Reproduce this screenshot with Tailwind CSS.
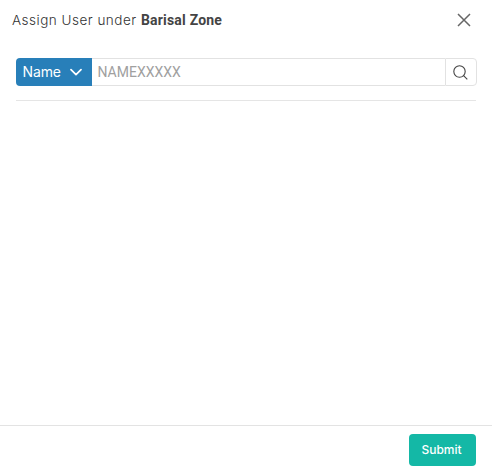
<!DOCTYPE html>
<html lang="en">
<head>
<meta charset="utf-8">
<title>Assign User</title>
<script src="https://cdn.jsdelivr.net/npm/@tailwindcss/browser@4"></script>
</head>
<body class="bg-white font-['Inter',sans-serif]">
<div class="flex h-[471px] w-[492px] flex-col overflow-hidden">
  <header class="flex h-10 shrink-0 items-center justify-between pl-3 pr-[21px]">
    <h1 class="text-[13.5px] leading-5 tracking-[0.5px] whitespace-nowrap text-[#333]"><span class="font-light">Assign User under</span> <b class="font-['Roboto',sans-serif] text-[14px] font-bold tracking-[0.2px] text-[#444]">Barisal Zone</b></h1>
    <button aria-label="Close"><svg class="block size-[14px]" viewBox="0 0 14 14" fill="none" stroke="#666" stroke-width="1.5"><path d="M1 1l12 12M13 1L1 13"/></svg></button>
  </header>
  <main class="flex-1 pl-4 pr-[15px] pt-[18px]">
    <div class="flex h-7">
      <button class="flex w-[76px] shrink-0 items-center rounded-l bg-[#287fb9] pl-[6.5px] text-[14px] text-white">
        <span class="w-[39px] pb-px text-left tracking-[-0.1px]">Name</span>
        <svg class="ml-2 h-3 w-3" viewBox="0 0 12 12" fill="none" stroke="currentColor" stroke-width="1.7" stroke-linecap="round" stroke-linejoin="round"><path d="M1 3.7l5 5 5-5"/></svg>
      </button>
      <div class="flex flex-1 items-center border-y border-[#e2e2e2] pl-[5.5px] font-['Roboto',sans-serif] text-[14px] text-[#a0a0a0]">NAMEXXXXX</div>
      <button aria-label="Search" class="flex w-8 shrink-0 items-center justify-center rounded-r border border-[#e2e2e2]"><svg class="mr-px size-[15px]" viewBox="0 0 15 15" fill="none" stroke="#444" stroke-width="1.1"><circle cx="6.5" cy="6.5" r="5.7"/><path d="M10.6 10.6l3.7 3.7"/></svg></button>
    </div>
    <div class="mt-[14px] mr-px h-px bg-[#e5e5e5]"></div>
  </main>
  <footer class="flex h-[46px] shrink-0 items-start justify-end border-t border-[#e3e3e3] pr-4 pt-2">
    <button class="h-8 w-[67px] rounded bg-[#14b8a6] pr-[2px] text-[12px] font-medium text-white">Submit</button>
  </footer>
</div>
</body>
</html>
